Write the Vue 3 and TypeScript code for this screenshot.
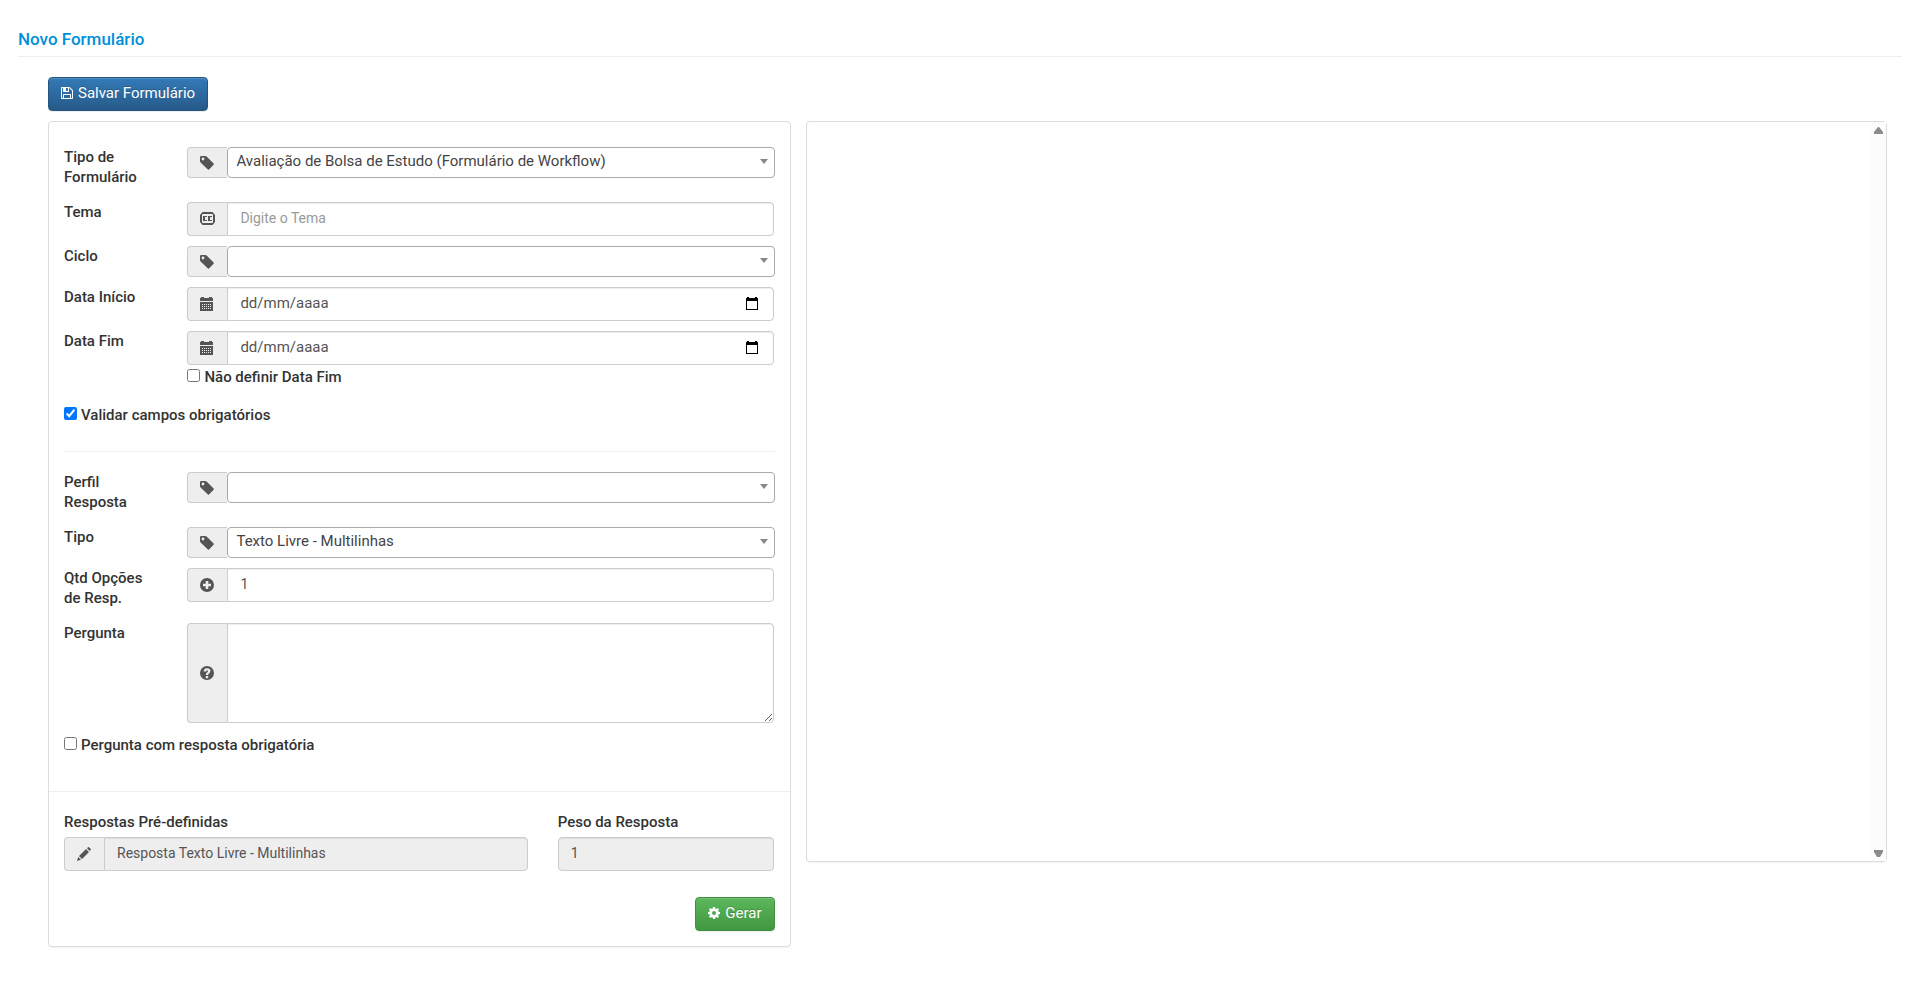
<script setup lang="ts">
import { ref } from 'vue'

type IconName = 'tag' | 'cc' | 'calendar' | 'plus' | 'question' | 'pencil'

interface Field {
  id: string
  label: string
  icon: IconName
  kind: 'select' | 'text' | 'date' | 'textarea'
  value: string
  placeholder?: string
}

const icons: Record<IconName, string> = {
  tag: 'M0 1.2Q0 0 1.2 0H5.2Q6 0 6.6 .6L13.6 7.6Q14.2 8.2 13.6 8.8L9 13.5Q8.5 14 7.9 13.5L.6 6.4Q0 5.8 0 5.2ZM3 1.6A1.4 1.4 0 1 0 3 4.4A1.4 1.4 0 1 0 3 1.6Z',
  cc: 'M2.5 0H12.5L15 3V10L12.500 13H2.500L0 10V3ZM3 2Q2 2 2 3V10Q2 11 3 11H12Q13 11 13 10V3Q13 2 12 2ZM3 4H7V5H5V8H7V9H3ZM8 4H12V5H10V8H12V9H8Z',
  calendar: 'M0 1H1V0H4V1H9V0H12V1H13V4H0ZM0 5H13V14H0ZM2 7v1h1v-1zM4 7v1h1v-1zM6 7v1h1v-1zM8 7v1h1v-1zM10 7v1h1v-1zM2 9v1h1v-1zM4 9v1h1v-1zM6 9v1h1v-1zM8 9v1h1v-1zM10 9v1h1v-1zM2 11v1h1v-1zM4 11v1h1v-1zM6 11v1h1v-1zM8 11v1h1v-1zM10 11v1h1v-1z',
  plus: 'M7 0A7 7 0 1 0 7 14A7 7 0 1 0 7 0ZM5.700 3H8.300V5.700H11V8.300H8.300V11H5.700V8.300H3V5.700H5.700Z',
  question: 'M7 0A7 7 0 1 0 7 14A7 7 0 1 0 7 0ZM5.800 10H8.200V12.200H5.800ZM3.700 5.500Q3.900 2.200 7.100 2.200Q10.400 2.300 10.400 5Q10.400 6.400 9.200 7.200Q8.200 7.900 8.200 9H5.800Q5.800 7.300 7 6.400Q8 5.800 8 5.100Q8 4.300 7.200 4.300Q6.300 4.300 6.200 5.500Z',
  pencil: 'M0 14L1.200 10L4 12.800ZM2 9L9 2L12 5L5 12ZM10 1.200L11.200 0Q11.600 -.2 12 .2L13.800 2Q14.200 2.400 13.800 2.800L12.700 4Z',
}

const topFields = ref<Field[]>([
  { id: 'tipo-formulario', label: 'Tipo de Formulário', icon: 'tag', kind: 'select', value: 'Avaliação de Bolsa de Estudo (Formulário de Workflow)' },
  { id: 'tema', label: 'Tema', icon: 'cc', kind: 'text', value: '', placeholder: 'Digite o Tema' },
  { id: 'ciclo', label: 'Ciclo', icon: 'tag', kind: 'select', value: '' },
  { id: 'data-inicio', label: 'Data Início', icon: 'calendar', kind: 'date', value: '', placeholder: 'dd/mm/aaaa' },
  { id: 'data-fim', label: 'Data Fim', icon: 'calendar', kind: 'date', value: '', placeholder: 'dd/mm/aaaa' },
])

const questionFields = ref<Field[]>([
  { id: 'perfil', label: 'Perfil Resposta', icon: 'tag', kind: 'select', value: '' },
  { id: 'tipo', label: 'Tipo', icon: 'tag', kind: 'select', value: 'Texto Livre - Multilinhas' },
  { id: 'qtd', label: 'Qtd Opções de Resp.', icon: 'plus', kind: 'text', value: '1' },
  { id: 'pergunta', label: 'Pergunta', icon: 'question', kind: 'textarea', value: '' },
])

const groups = [topFields, questionFields]
const semDataFim = ref(false)
const validar = ref(true)
const obrigatoria = ref(false)
</script>

<template>
  <main class="page">
    <h1 class="title">Novo Formulário</h1>

    <div class="content">
      <button type="button" class="btn btn-primary">
        <svg class="btn-icon" viewBox="0 128 1536 1536" aria-hidden="true">
          <path d="M384 1536h768v-384h-768v384zm896 0h128v-896q0-14-10-38.5t-20-34.5l-281-281q-10-10-34-20t-39-10v416q0 40-28 68t-68 28h-576q-40 0-68-28t-28-68v-416h-128v1280h128v-416q0-40 28-68t68-28h832q40 0 68 28t28 68v416zm-384-928v-320q0-13-9.500-22.500t-22.500-9.500h-192q-13 0-22.500 9.500t-9.500 22.500v320q0 13 9.500 22.500t22.500 9.500h192q13 0 22.500-9.500t9.500-22.500zm640 32v928q0 40-28 68t-68 28h-1344q-40 0-68-28t-28-68v-1344q0-40 28-68t68-28h928q40 0 88 20t76 48l280 280q28 28 48 76t20 88z" />
        </svg>
        Salvar Formulário
      </button>

      <div class="columns">
        <form class="panel form-panel" @submit.prevent>
          <template v-for="(group, g) in groups" :key="g">
            <section class="section">
              <div v-for="field in group.value" :key="field.id" class="row">
                <label class="label" :for="field.id">{{ field.label }}</label>
                <div class="group" :class="{ inset: field.kind !== 'select' }">
                  <span class="addon">
                    <svg class="icon" viewBox="0 0 14 14" aria-hidden="true"><path fill-rule="evenodd" :d="icons[field.icon]" /></svg>
                  </span>
                  <div v-if="field.kind === 'select'" class="select-wrap">
                    <select :id="field.id" v-model="field.value" class="select">
                      <option :value="field.value">{{ field.value }}</option>
                    </select>
                    <svg class="caret" viewBox="0 0 8 5" aria-hidden="true"><path d="M0 0H8L4 5Z" /></svg>
                  </div>
                  <textarea v-else-if="field.kind === 'textarea'" :id="field.id" v-model="field.value" class="control area"></textarea>
                  <div v-else-if="field.kind === 'date'" class="control date">
                    <input :id="field.id" v-model="field.value" type="text" class="date-input" :placeholder="field.placeholder" />
                    <button type="button" class="picker" aria-label="Abrir calendário">
                      <svg viewBox="0 0 12 13" aria-hidden="true"><path fill-rule="evenodd" d="M0 1H1V0H3V1H9V0H11V1H12V13H0ZM1 4V12H11V4Z" /></svg>
                    </button>
                  </div>
                  <input v-else :id="field.id" v-model="field.value" type="text" class="control" :placeholder="field.placeholder" />
                </div>
              </div>

              <template v-if="g === 0">
                <label class="check check-end"><input v-model="semDataFim" type="checkbox" />Não definir Data Fim</label>
                <label class="check check-validate"><input v-model="validar" type="checkbox" />Validar campos obrigatórios</label>
                <hr class="rule" />
              </template>
              <label v-else class="check check-required"><input v-model="obrigatoria" type="checkbox" />Pergunta com resposta obrigatória</label>
            </section>
          </template>

          <section class="answers">
            <div class="answer">
              <label class="answer-label" for="resposta">Respostas Pré-definidas</label>
              <div class="group">
                <span class="addon">
                  <svg class="icon" viewBox="0 0 14 14" aria-hidden="true"><path :d="icons.pencil" /></svg>
                </span>
                <input id="resposta" type="text" class="control" value="Resposta Texto Livre - Multilinhas" disabled />
              </div>
            </div>
            <div class="answer">
              <label class="answer-label" for="peso">Peso da Resposta</label>
              <input id="peso" type="text" class="control alone" value="1" disabled />
            </div>
          </section>

          <footer class="actions">
            <button type="submit" class="btn btn-success">
              <svg class="btn-icon" viewBox="0 0 12 12" aria-hidden="true">
                <path fill-rule="evenodd" d="M5 0H7L7.300 1.500L8.300 1.900L9.600 1L11 2.400L10.100 3.700L10.500 4.700L12 5V7L10.500 7.300L10.100 8.300L11 9.600L9.600 11L8.300 10.100L7.300 10.500L7 12H5L4.700 10.500L3.700 10.100L2.400 11L1 9.600L1.900 8.300L1.500 7.300L0 7V5L1.500 4.700L1.900 3.700L1 2.400L2.400 1L3.700 1.900L4.700 1.500ZM6 4A2 2 0 1 0 6 8A2 2 0 1 0 6 4Z" />
              </svg>
              Gerar
            </button>
          </footer>
        </form>

        <section class="panel preview" aria-label="Pré-visualização">
          <div class="scrollbar">
            <svg class="arrow" viewBox="0 0 9 7" aria-hidden="true"><path d="M4 0H5L9 5V7H0V5Z" /></svg>
            <svg class="arrow" viewBox="0 0 9 7" aria-hidden="true"><path d="M0 0H9V2L6 7H3L0 2Z" /></svg>
          </div>
        </section>
      </div>
    </div>
  </main>
</template>

<style>
body {
  margin: 0;
  background: #fff;
}
</style>

<style scoped>
.page,
.page * {
  box-sizing: border-box;
}

.page {
  padding: 28px 18px 38px;
  font: 400 14px/20px Roboto, sans-serif;
  color: #333;
}

.title {
  margin: 0 0 20px;
  padding-bottom: 6px;
  border-bottom: 1px solid #eee;
  color: #0090d9;
  font-size: 17px;
  font-weight: 500;
  line-height: 22px;
}

.content {
  padding: 0 15px;
}

.columns {
  display: grid;
  grid-template-columns: 5fr 7fr;
  align-items: start;
  margin-top: 10px;
}

.btn {
  display: inline-flex;
  align-items: center;
  gap: 5px;
  height: 34px;
  padding: 0 12px 2px;
  border: 1px solid;
  border-radius: 4px;
  color: #fff;
  font: 400 15px/20px Roboto, sans-serif;
  text-shadow: 0 -1px 0 rgba(0, 0, 0, 0.2);
  box-shadow: inset 0 1px 0 rgba(255, 255, 255, 0.15), 0 1px 1px rgba(0, 0, 0, 0.075);
}

.btn-primary {
  margin-left: 15px;
  border-color: #245580;
  background: linear-gradient(#337ab7, #265a88);
}

.btn-success {
  border-color: #3e8f3e;
  background: linear-gradient(#5cb85c, #419641);
}

.btn-icon {
  width: 12px;
  height: 12px;
  fill: currentColor;
}

.panel {
  border: 1px solid #ddd;
  border-radius: 4px;
  background: #fff;
  box-shadow: 0 1px 1px rgba(0, 0, 0, 0.05);
}

.form-panel {
  margin: 0 15px;
  padding: 25px 0 15px;
}

.row {
  display: grid;
  grid-template-columns: 2fr 10fr;
  align-items: start;
  margin-bottom: 10px;
}

.label,
.answer-label,
.check {
  font-size: 15px;
  font-weight: 500;
}

.label {
  padding: 0 15px;
  margin-bottom: 5px;
}

.row .group {
  margin: 0 15px;
}

.row .inset {
  margin-right: 16px;
}

.group {
  display: flex;
}

.addon {
  display: flex;
  flex: 0 0 40px;
  align-items: center;
  justify-content: center;
  padding-right: 1px;
  border: 1px solid #ccc;
  border-right: 0;
  border-radius: 4px 0 0 4px;
  background: #eee;
}

.icon {
  width: 14px;
  height: 14px;
  fill: #555;
  overflow: visible;
}

.control {
  flex: 1;
  min-width: 0;
  width: 100%;
  height: 34px;
  margin: 0;
  padding: 0 12px 2px;
  border: 1px solid #ccc;
  border-radius: 0 4px 4px 0;
  background: #fff;
  color: #555;
  font: 400 14px/20px Roboto, sans-serif;
  box-shadow: inset 0 1px 1px rgba(0, 0, 0, 0.075);
}

.control:disabled {
  background: #eee;
}

.control::placeholder {
  color: #999;
}

.alone {
  display: block;
  border-radius: 4px;
}

.area {
  height: 100px;
  padding: 6px 12px;
  resize: vertical;
}

.date {
  display: flex;
  align-items: center;
}

.date-input {
  flex: 1;
  min-width: 0;
  padding: 0;
  border: 0;
  background: none;
  color: #555;
  font: 400 15px/20px Roboto, sans-serif;
}

.date-input::placeholder {
  color: #555;
  opacity: 1;
}

.picker {
  display: flex;
  padding: 1px 3px 0;
  border: 0;
  background: none;
}

.picker svg {
  width: 12px;
  height: 13px;
}

.select-wrap {
  position: relative;
  flex: 1;
  min-width: 0;
}

.select {
  display: block;
  width: 100%;
  height: 31px;
  padding: 0 24px 4px 8px;
  border: 1px solid #aaa;
  border-radius: 4px;
  appearance: none;
  background: #fff;
  color: #444;
  font: 400 15px/20px Roboto, sans-serif;
}

.caret {
  position: absolute;
  top: 12px;
  right: 7px;
  width: 8px;
  height: 5px;
  fill: #888;
  pointer-events: none;
}

.check {
  display: flex;
  align-items: center;
  gap: 4px;
  margin: 0 15px;
}

.check input {
  width: 13px;
  height: 13px;
  margin: 0 0 4px;
}

.check-end {
  margin-top: -8px;
  margin-left: calc(100% / 6 + 15px);
}

.check-validate {
  margin-top: 18px;
}

.rule {
  height: 1px;
  margin: 26px 15px 20px;
  border: 0;
  background: #eee;
}

.check-required {
  margin-top: 12px;
  margin-bottom: 36px;
}

.answers {
  display: grid;
  grid-template-columns: 8fr 4fr;
  padding-top: 20px;
  border-top: 1px solid #eee;
}

.answer {
  padding: 0 15px;
}

.answer-label {
  display: block;
  margin-bottom: 5px;
}

.actions {
  display: flex;
  justify-content: flex-end;
  margin-top: 26px;
  padding: 0 15px;
}

.preview {
  display: flex;
  justify-content: flex-end;
  height: 741px;
}

.scrollbar {
  display: flex;
  flex-direction: column;
  align-items: center;
  justify-content: space-between;
  width: 15px;
  padding: 5px 0 4px;
  background: #fcfcfc;
}

.arrow {
  width: 9px;
  height: 7px;
  fill: #8b8b8b;
}
</style>
